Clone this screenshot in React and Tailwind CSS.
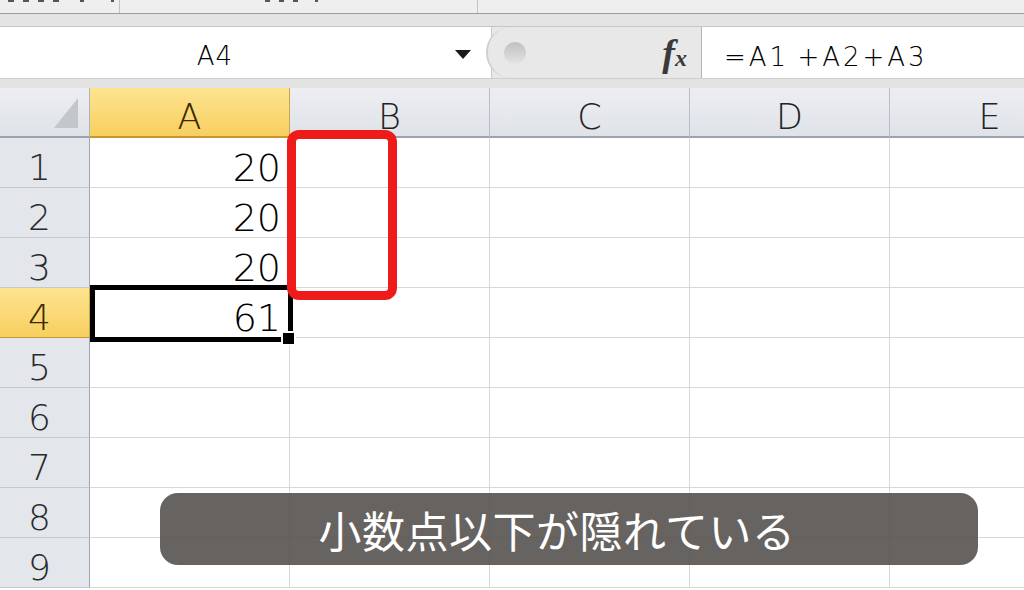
import React from "react";

const cols = ["A", "B", "C", "D", "E"];
const data = { 1: "20", 2: "20", 3: "20", 4: "61" };

function TopStrip() {
  return (
    <div className="h-[14px] bg-[#efefef] border-b border-[#9c9c9c] flex">
      <div className="w-[120px] shrink-0 border-r border-[#c2c2c2] flex gap-[9px] pl-[8px]">
        <span className="w-[6px] h-[2px] bg-[#555]" />
        <span className="w-[6px] h-[2px] bg-[#555]" />
        <span className="w-[6px] h-[2px] bg-[#555]" />
        <span className="w-[6px] h-[2px] bg-[#555]" />
        <span className="w-[4px] h-[2px] bg-[#555] ml-[12px]" />
        <span className="w-[3px] h-[2px] bg-[#555] ml-[18px]" />
      </div>
      <div className="w-[358px] shrink-0 border-r border-[#c2c2c2] flex gap-[9px] pl-[145px]">
        <span className="w-[5px] h-[2px] bg-[#555]" />
        <span className="w-[5px] h-[2px] bg-[#555]" />
        <span className="w-[5px] h-[2px] bg-[#555]" />
        <span className="w-[3px] h-[2px] bg-[#555] ml-[8px]" />
      </div>
      <div className="flex-1" />
    </div>
  );
}

function FormulaBar() {
  return (
    <div className="h-[51px] flex bg-[#e6e6e6]">
      <div className="w-[492px] shrink-0 bg-white relative flex items-center pt-[6px] border-r border-[#c8c8c8]">
        <div className="w-[430px] text-center text-[26px] tracking-[1px] text-black leading-none font-extralight">A4</div>
        <svg className="absolute left-[455px] top-[23px]" width="16" height="9" viewBox="0 0 16 9">
          <polygon points="0,0 16,0 8,9" fill="#1a1a1a" />
        </svg>
      </div>
      <div className="w-[210px] shrink-0 relative bg-[#e8e8e8] flex items-center justify-end pr-[14px] border-r border-[#b4b4b4]">
        <div className="absolute left-[-6px] top-[0px] w-[50px] h-[51px] rounded-full bg-[#e8e8e8] border-l-2 border-[#cfcfcf]" />
        <div className="absolute left-[12px] top-[15px] w-[22px] h-[22px] rounded-full bg-gradient-to-b from-[#c0c0c0] to-[#e4e4e4]" />
        <span className="font-['Liberation_Serif'] italic font-bold text-[#3a3a3a] leading-none">
          <span className="text-[38px]">f</span>
          <span className="text-[24px]">x</span>
        </span>
      </div>
      <div className="flex-1 bg-white flex items-center pl-[22px] pt-[8px]">
        <span className="text-[26px] tracking-[3px] text-black leading-none font-extralight">
          =A1<span className="tracking-[0px]"> </span>+A2+A3
        </span>
      </div>
    </div>
  );
}

function HeaderRow() {
  return (
    <div className="flex h-[50px]">
      <div className="w-[90px] shrink-0 relative bg-gradient-to-b from-[#eceef2] to-[#dfe2e7] border-r border-[#aeb4bd] border-b-2 border-b-[#9da3ac]">
        <svg className="absolute left-[54px] top-[10px]" width="24" height="30" viewBox="0 0 24 30">
          <polygon points="24,0 24,30 0,30" fill="#c3c7cc" />
        </svg>
      </div>
      {cols.map((c, i) => (
        <div
          key={c}
          className={`w-[200px] shrink-0 flex items-center justify-center pt-[10px] text-[35px] leading-none font-extralight border-r border-b-2 ${
            i === 0
              ? "bg-gradient-to-b from-[#fde48f] to-[#f8cf5f] border-r-[#c9a448] border-b-[#c8952e] text-[#3a2a00]"
              : "bg-gradient-to-b from-[#eceef2] to-[#dfe2e7] border-r-[#b9bec6] border-b-[#9da3ac] text-[#222]"
          }`}
        >
          {c}
        </div>
      ))}
    </div>
  );
}

function Row({ n }) {
  const active = n === 4;
  return (
    <div className="flex h-[50px]">
      <div
        className={`w-[90px] shrink-0 flex items-center justify-center pr-[10px] pt-[10px] text-[36px] leading-none font-extralight border-r border-b ${
          active
            ? "bg-gradient-to-b from-[#fde48f] to-[#f8cf5f] border-r-[#c9a448] border-b-[#c8952e] text-[#3a2a00]"
            : "bg-[#e3e6eb] border-r-[#a0a6af] border-b-[#c4c9d0] text-[#2a2a2a]"
        }`}
      >
        {n}
      </div>
      {cols.map((c, i) => (
        <div
          key={c}
          className="w-[200px] shrink-0 bg-white border-r border-b border-[#d8d8d8] flex items-center justify-end pr-[8px] pt-[10px] text-[38px] leading-none font-extralight text-black"
        >
          {i === 0 ? data[n] || "" : ""}
        </div>
      ))}
    </div>
  );
}

export default function App() {
  return (
    <div className="w-[1024px] h-[590px] overflow-hidden relative bg-white font-['DejaVu_Sans',sans-serif]">
      <TopStrip />
      <div className="h-[13px] bg-[#e4e4e4] border-b border-[#c6c6c6]" />
      <FormulaBar />
      <div className="h-[10px] bg-[#e3e3e3] border-t border-[#cdcdcd]" />
      <HeaderRow />
      {[1, 2, 3, 4, 5, 6, 7, 8, 9].map((n) => (
        <Row key={n} n={n} />
      ))}

      {/* selection */}
      <div className="absolute left-[90px] top-[285px] w-[203px] h-[57px] border-[5px] border-black" />
      <div className="absolute left-[281px] top-[331px] w-[15px] h-[15px] bg-black border-2 border-white" />

      {/* red highlight */}
      <div className="absolute left-[287px] top-[130px] w-[110px] h-[170px] border-[9px] border-[#ee1b1b] rounded-[12px]" />

      {/* caption */}
      <div className="absolute left-[160px] top-[493px] w-[818px] h-[72px] rounded-[18px] bg-[#57524f]/90 flex items-center justify-center pr-[24px]">
        <span className="text-white text-[43px] tracking-[0.5px] leading-none font-['Noto_Sans_CJK_JP',sans-serif] font-normal">
          小数点以下が隠れている
        </span>
      </div>
    </div>
  );
}
